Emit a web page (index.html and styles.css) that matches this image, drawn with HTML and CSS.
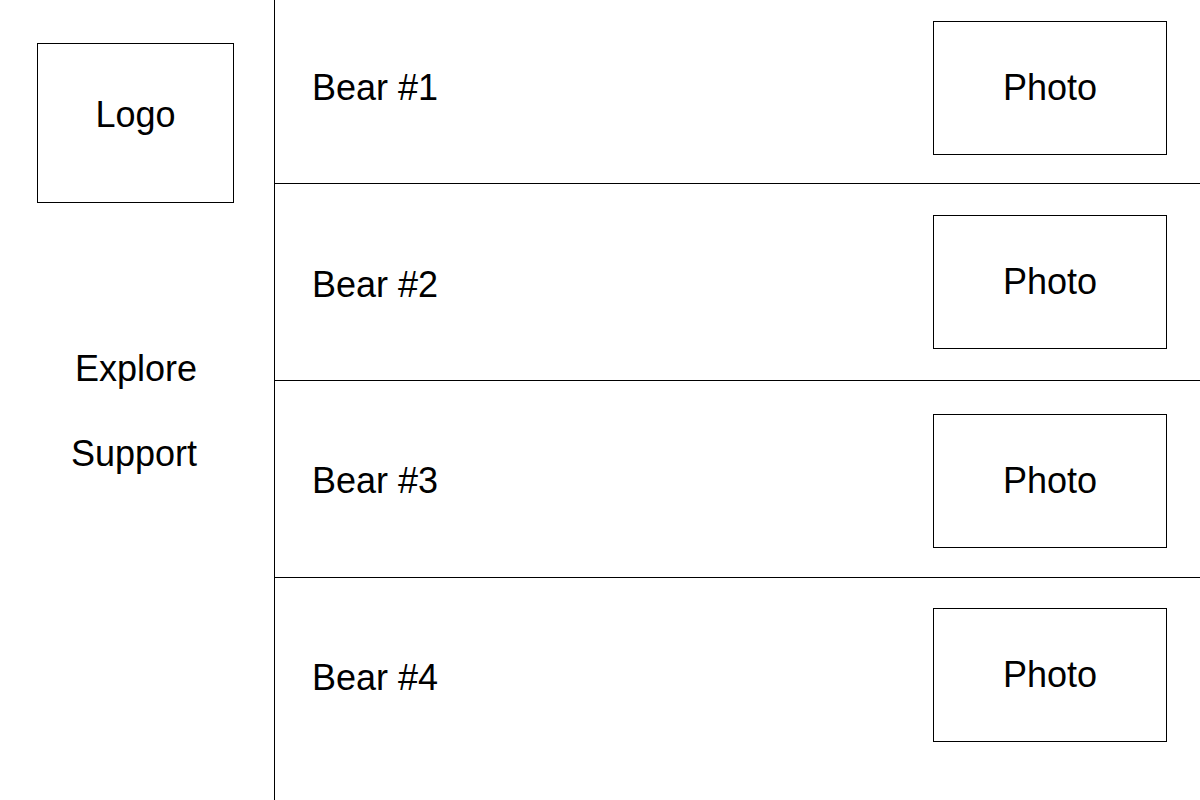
FILE: index.html
```html
<!DOCTYPE html>
<html lang="en">
<head>
<meta charset="utf-8">
<title>Bears</title>
<link rel="stylesheet" href="styles.css">
</head>
<body>
<div class="page">
  <aside class="sidebar">
    <div class="logo">Logo</div>
    <nav class="nav">
      <a class="nav-link">Explore</a>
      <a class="nav-link">Support</a>
    </nav>
  </aside>
  <main class="list">
    <div class="row row-first">
      <span class="bear-name">Bear #1</span>
      <div class="photo">Photo</div>
    </div>
    <div class="row">
      <span class="bear-name">Bear #2</span>
      <div class="photo">Photo</div>
    </div>
    <div class="row row-third">
      <span class="bear-name">Bear #3</span>
      <div class="photo">Photo</div>
    </div>
    <div class="row row-last">
      <span class="bear-name">Bear #4</span>
      <div class="photo">Photo</div>
    </div>
  </main>
</div>
</body>
</html>
```

FILE: styles.css
```css
* {
  box-sizing: border-box;
}

html, body {
  margin: 0;
  padding: 0;
  background: #ffffff;
}

body {
  font-family: "Liberation Sans", Arial, sans-serif;
  font-size: 36px;
  line-height: 40px;
  color: #000000;
  overflow: hidden;
}

.page {
  display: flex;
  width: 1200px;
  height: 800px;
}

.sidebar {
  width: 275px;
  flex: none;
  border-right: 1px solid #000000;
  display: flex;
  flex-direction: column;
}

.logo {
  margin: 43px 0 0 37px;
  width: 197px;
  height: 160px;
  border: 1px solid #000000;
  padding-top: 51px;
  text-align: center;
}

.nav {
  margin-top: 146px;
  display: flex;
  flex-direction: column;
  align-items: flex-end;
  padding-right: 77px;
  gap: 45px;
}

.nav-link {
  display: block;
  color: #000000;
  text-decoration: none;
}

.list {
  flex: 1;
  display: flex;
  flex-direction: column;
}

.row {
  height: 197px;
  flex: none;
  border-bottom: 1px solid #000000;
  display: flex;
  align-items: center;
  justify-content: space-between;
  padding: 0 33px 0 37px;
}

.row:nth-child(even) .bear-name {
  padding-top: 6px;
}

.row-first {
  height: 184px;
  padding-bottom: 8px;
}

.row-third {
  padding-top: 4px;
}

.row-last {
  border-bottom: none;
  padding-bottom: 3px;
}

.photo {
  width: 234px;
  height: 134px;
  border: 1px solid #000000;
  display: flex;
  align-items: center;
  justify-content: center;
}
```
